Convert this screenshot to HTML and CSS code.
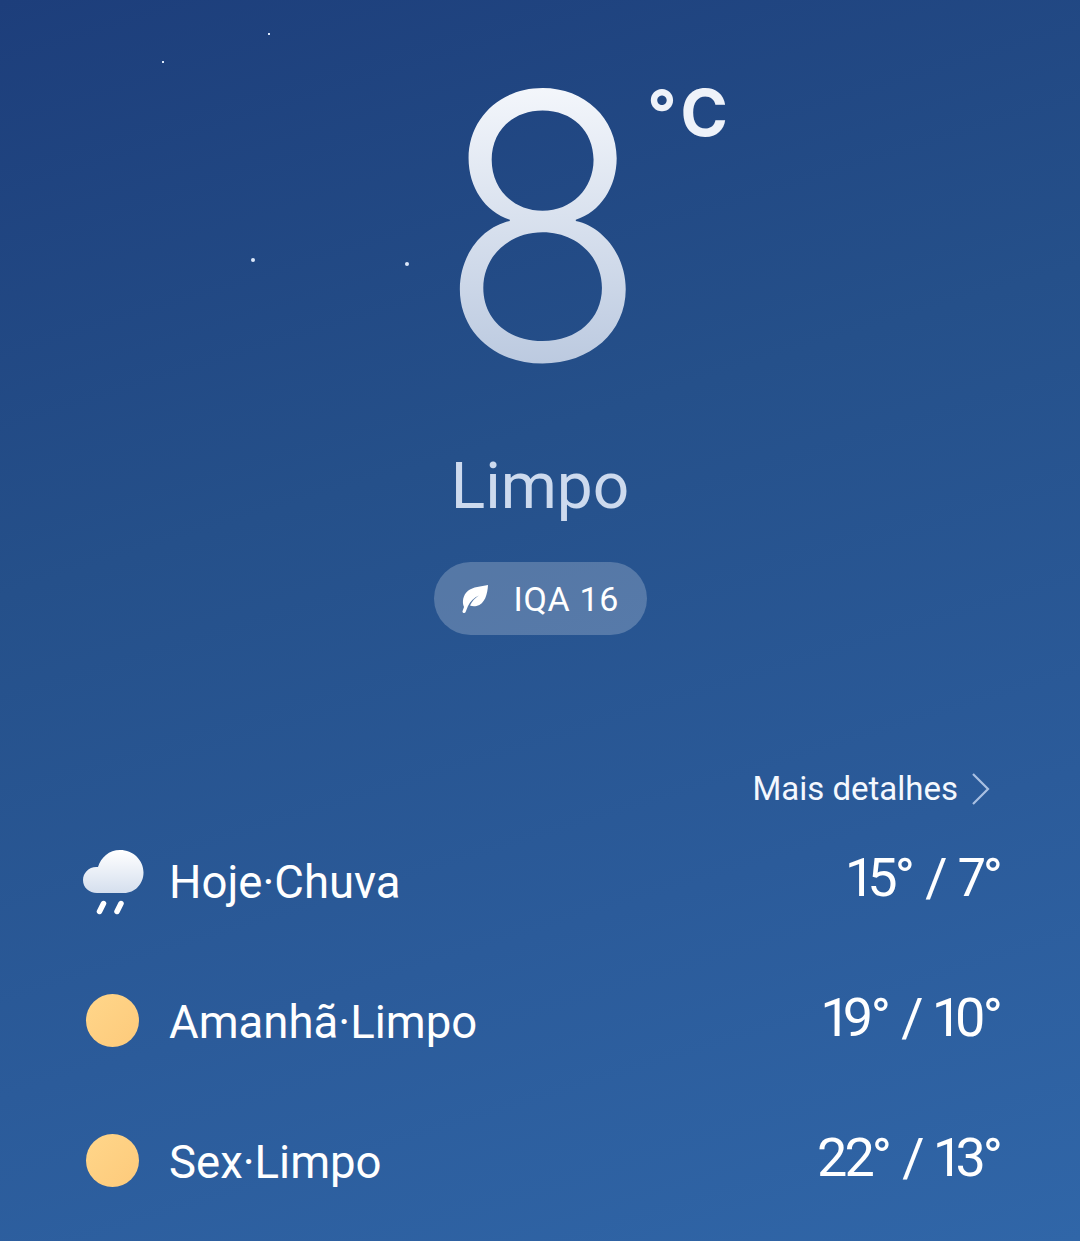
FILE: index.html
```html
<!doctype html>
<html lang="en">
<head>
<title>Tempo</title>
<meta charset="utf-8">
<meta name="viewport" content="width=device-width, initial-scale=1">
<link rel="stylesheet" href="styles.css">
</head>
<body>

<div class="sky">

	<i class="star star-a"></i>
	<i class="star star-b"></i>
	<i class="star star-c big"></i>
	<i class="star star-d big"></i>

	<div class="now">
		<div class="temp">
			<span class="tempNum">8</span>
			<span class="tempUnit">°C</span>
		</div>
		<div class="cond">Limpo</div>
		<div class="aqi">
			<svg class="leaf" width="28" height="30" viewBox="0 0 28 30">
				<path fill="#fff" d="M27 1C26.500 10 24 20 15.500 22C13 22.600 11 22.300 9 21.600C11 17 14 14 18 11.500C13 13.500 9.500 17 7 22L4.500 28.300C3.900 29.700 1 29 1.500 27.300L3 23C0.800 18 2 11 7 6.800C12 2.800 20 2.500 27 1Z"/>
			</svg>
			<span>IQA 16</span>
		</div>
	</div>

	<div class="forecast">
		<div class="more">
			<span>Mais detalhes</span>
			<svg width="20" height="32" viewBox="0 0 20 32">
				<path fill="none" stroke="#a9c0e2" stroke-width="2.200" d="M2 1L17 16L2 31"/>
			</svg>
		</div>

		<div class="day">
			<svg class="ico" width="61" height="65" viewBox="0 0 61 65">
				<defs>
					<linearGradient id="cloudFill" x1="0" y1="0" x2="0" y2="1">
						<stop offset="0" stop-color="#fff"/>
						<stop offset="1" stop-color="#d5dfee"/>
					</linearGradient>
				</defs>
				<path fill="url(#cloudFill)" d="M14 43C6 43 0 37.500 0 30C0 22.500 6.500 16 15 17C18 7.500 26 0 37 0C50 0 60.500 10 60.500 22.500C60.500 34 52 43 41 43Z"/>
				<path fill="none" stroke="#fff" stroke-width="5.500" stroke-linecap="round" d="M20.500 53.500L16.500 61.500M38 53.500L34 61.500"/>
			</svg>
			<span class="dayName">Hoje·Chuva</span>
			<span class="dayTemp">15° / 7°</span>
		</div>

		<div class="day">
			<span class="ico"><i class="sun"></i></span>
			<span class="dayName">Amanhã·Limpo</span>
			<span class="dayTemp">19° / 10°</span>
		</div>

		<div class="day">
			<span class="ico"><i class="sun"></i></span>
			<span class="dayName">Sex·Limpo</span>
			<span class="dayTemp">22° / 13°</span>
		</div>
	</div>

</div>

</body>
</html>
```

FILE: styles.css
```css
* { margin: 0; padding: 0; box-sizing: border-box; }
html, body { height: 100%; overflow: hidden; }

body {
	font-family: Roboto, "Liberation Sans", sans-serif;
	color: #fff;
}

.sky {
	position: relative;
	height: 1241px;
	width: 1080px;
	padding-top: 36px;
	background: linear-gradient(163deg, #1d3e7b 0%, #25508a 38%, #2b5b9a 70%, #3066a8 100%);
}

/* stars, free placed */
.star {
	position: absolute;
	width: 2px; height: 2px;
	background: #dce8fa;
}
.star.big {
	width: 4px; height: 4px;
	border-radius: 50%;
}
.star-a { top: 33px; left: 268px; }
.star-b { top: 61px; left: 162px; }
.star-c { top: 258px; left: 251px; }
.star-d { top: 262px; left: 405px; }

.now {
	display: flex;
	flex-direction: column;
	align-items: center;
}

.temp {
	position: relative;
	height: 380px;
	padding-left: 6px;
}
.tempNum {
	display: block;
	font-family: Inter, Roboto, sans-serif;
	font-size: 369px;
	font-weight: 365;
	line-height: 380px;
	transform: scaleX(0.93);
	background: linear-gradient(180deg, #f3f6fb 14%, #bccae0 86%);
	-webkit-background-clip: text;
	background-clip: text;
	color: transparent;
}
.tempUnit {
	position: absolute;
	top: 42px; left: 223px;
	font-family: Inter, Roboto, sans-serif;
	font-size: 64px;
	font-weight: 700;
	line-height: 70px;
	letter-spacing: 5px;
	white-space: nowrap;
	color: #eef2f9;
}

.cond {
	margin-top: 31px;
	font-size: 64px;
	line-height: 80px;
	color: #cddaee;
}

.aqi {
	display: flex;
	align-items: center;
	gap: 25px;
	margin-top: 35px;
	height: 73px;
	width: 213px;
	padding-left: 27px;
	border-radius: 37px;
	background: rgba(255,255,255,0.22);
	font-size: 34px;
	letter-spacing: 0.7px;
}

.forecast {
	margin-top: 132px;
	padding: 0 80px 0 83px;
}

.more {
	display: flex;
	justify-content: flex-end;
	align-items: center;
	gap: 13px;
	margin-bottom: 23px;
	font-size: 33px;
	line-height: 44px;
	padding-right: 9px;
	color: #f4f8fe;
}

.day {
	display: flex;
	align-items: center;
	height: 96px;
}
.day + .day { margin-top: 44px; }

.ico {
	display: flex;
	width: 61px;
	flex: none;
	margin-right: 25px;
}
.sun {
	width: 53px; height: 53px;
	margin: 0 0 3px 3px;
	border-radius: 50%;
	background: linear-gradient(135deg, #ffd68a, #fdca7b);
}

.dayName {
	flex: 1;
	font-size: 45.500px;
	font-weight: 400;
}
.dayTemp {
	margin-bottom: 9px;
	font-size: 54px;
	font-weight: 385;
	font-variant-numeric: proportional-nums;
	letter-spacing: -3px;
	word-spacing: 3px;
}
```
